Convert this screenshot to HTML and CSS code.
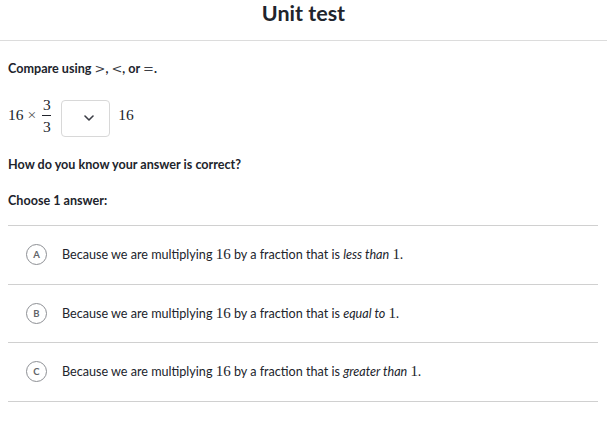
FILE: index.html
```html
<!DOCTYPE html>
<html>
<head>
<meta charset="utf-8">
<link rel="stylesheet" href="styles.css">
</head>
<body>
<header class="top"><h1 class="title">Unit test</h1></header>
<main class="content">
  <p class="prompt">Compare using <span class="m sym">&gt;</span>, <span class="m sym">&lt;</span>, or <span class="m sym">=</span>.</p>
  <div class="mathrow">
    <span class="m num">16</span>
    <span class="m times">×</span>
    <span class="frac"><span class="m">3</span><span class="bar"></span><span class="m">3</span></span>
    <div class="select">
      <svg width="10" height="6" viewBox="0 0 10 6"><path d="M1 1 L5 5 L9 1" fill="none" stroke="#3b3d45" stroke-width="1.6" stroke-linecap="round" stroke-linejoin="round"/></svg>
    </div>
    <span class="m num">16</span>
  </div>
  <p class="question">How do you know your answer is correct?</p>
  <p class="choose">Choose 1 answer:</p>
  <ul class="options">
    <li class="option"><span class="letter">A</span><span class="otext">Because we are multiplying <span class="m">16</span> by a fraction that is <em>less than</em> <span class="m">1</span>.</span></li>
    <li class="option"><span class="letter">B</span><span class="otext">Because we are multiplying <span class="m">16</span> by a fraction that is <em>equal to</em> <span class="m">1</span>.</span></li>
    <li class="option"><span class="letter">C</span><span class="otext">Because we are multiplying <span class="m">16</span> by a fraction that is <em>greater than</em> <span class="m">1</span>.</span></li>
  </ul>
</main>
</body>
</html>
```

FILE: styles.css
```css
* { box-sizing: border-box; }
body {
  margin: 0;
  font-family: Lato, "Open Sans", sans-serif;
  color: #21242c;
  background: #fff;
}
.top {
  height: 41px;
  border-bottom: 1px solid #dcdcdc;
  display: flex;
  justify-content: center;
  align-items: flex-start;
}
.title {
  margin: 0;
  font-size: 21.5px;
  line-height: 26px;
  font-weight: 700;
}
.content {
  padding: 0 9px 0 8px;
}
.m {
  font-family: "Liberation Serif", "DejaVu Serif", serif;
  font-size: 15.5px;
  font-weight: 400;
}
.prompt {
  margin: 19px 0 0;
  font-size: 12.6px;
  line-height: 18px;
  font-weight: 700;
}
.prompt .sym {
  font-family: "DejaVu Sans", sans-serif;
  font-size: 13px;
  font-weight: 400;
  color: #3b3d45;
}
.mathrow {
  margin-top: 14px;
  height: 46px;
  display: flex;
  align-items: center;
}
.times {
  margin: 0 5px 0 4px;
  color: #555;
}
.frac {
  display: inline-flex;
  flex-direction: column;
  align-items: center;
  line-height: 17px;
  padding: 0 1px;
}
.bar {
  width: 9px;
  height: 1px;
  background: #21242c;
  margin: 2px 0;
}
.select {
  width: 49px;
  height: 37px;
  margin: 6px 8px 0 9px;
  border: 1px solid #d8d8d8;
  border-radius: 4px;
  display: flex;
  align-items: center;
  justify-content: flex-end;
  padding-right: 15px;
}
.question {
  margin: 18px 0 0;
  font-size: 12.6px;
  line-height: 18px;
  font-weight: 700;
}
.choose {
  margin: 18px 0 0;
  font-size: 12.6px;
  line-height: 18px;
  font-weight: 700;
}
.options {
  list-style: none;
  margin: 15px 0 0;
  padding: 0;
  border-top: 1px solid #d0d0d0;
}
.option {
  height: 58.6px;
  border-bottom: 1px solid #d0d0d0;
  display: flex;
  align-items: center;
  padding-left: 18px;
}
.letter {
  width: 21px;
  height: 21px;
  border: 1px solid #8d8f94;
  border-radius: 50%;
  display: flex;
  align-items: center;
  justify-content: center;
  font-size: 9.5px;
  font-weight: 700;
  color: #626569;
  margin-right: 15px;
  flex-shrink: 0;
}
.otext {
  font-size: 12.6px;
  line-height: 18px;
}
.otext .m { font-size: 15px; }
.otext em { font-style: italic; }
```
